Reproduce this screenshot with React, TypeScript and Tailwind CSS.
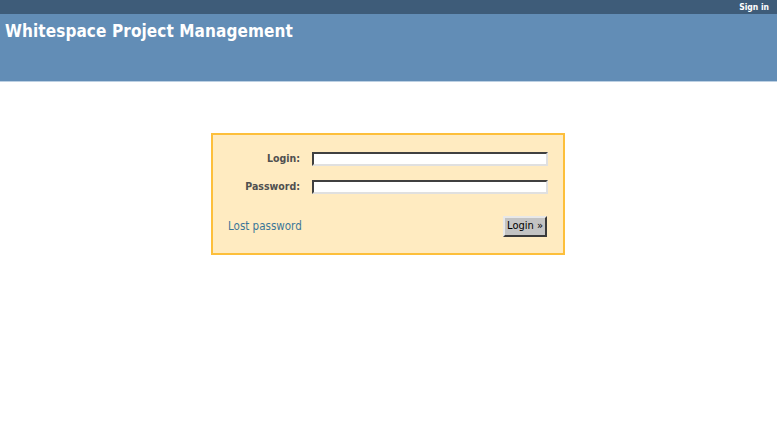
import React from 'react';

export default function App() {
  return (
    <div className="min-h-screen bg-white font-['DejaVu_Sans_Condensed','DejaVu_Sans',Verdana,sans-serif] text-[11px] text-[#484848]">
      {/* Top menu */}
      <div className="h-[14px] bg-[#3e5c79] flex items-center justify-end px-2">
        <a href="#" className="text-[8.5px] font-bold text-white leading-none">Sign in</a>
      </div>

      {/* Header */}
      <div className="h-[68px] bg-[#628db6] border-b border-[#bcd0e3] px-[5px] pt-[5px]">
        <h1 className="text-[17px] font-bold text-white leading-[24px] tracking-[0.1px]">Whitespace Project Management</h1>
      </div>

      {/* Login box */}
      <div className="flex justify-center pt-[51px] pr-[1px]">
        <div className="w-[354px] h-[122px] bg-[#ffebc1] border-2 border-[#fdbf3b] px-[15px] pt-[16px]">
          <div className="flex items-center h-[14px] mt-[1px]">
            <label className="w-[72px] text-right font-bold text-[10.5px] text-[#505050]">Login:</label>
            <input className="ml-[12px] w-[236px] h-[14px] bg-white border-2 border-t-[#404040] border-l-[#404040] border-b-[#e0e0e0] border-r-[#e0e0e0] outline-none" />
          </div>
          <div className="flex items-center h-[14px] mt-[14px]">
            <label className="w-[72px] text-right font-bold text-[10.5px] text-[#505050]">Password:</label>
            <input type="password" className="ml-[12px] w-[236px] h-[14px] bg-white border-2 border-t-[#404040] border-l-[#404040] border-b-[#e0e0e0] border-r-[#e0e0e0] outline-none" />
          </div>
          <div className="flex items-center justify-between mt-[22px] pr-[1px]">
            <a href="#" className="text-[#3b7698] text-[11.5px]">Lost password</a>
            <button className="h-[21px] w-[44px] bg-[#c3c3c3] text-black text-[11px] border-2 border-t-[#e8e8e8] border-l-[#e8e8e8] border-b-[#3a3a3a] border-r-[#3a3a3a]">Login »</button>
          </div>
        </div>
      </div>
    </div>
  );
}
